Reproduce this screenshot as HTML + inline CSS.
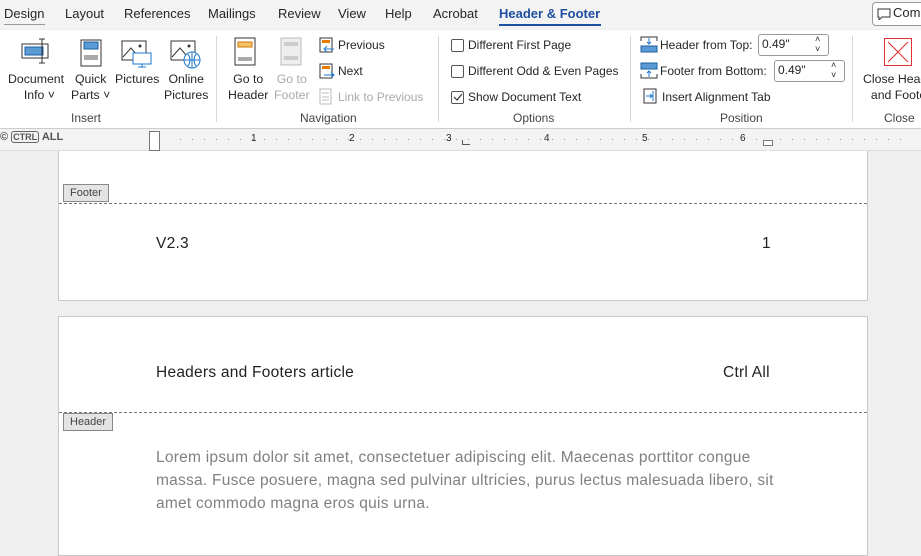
<!DOCTYPE html>
<html><head><style>
*{margin:0;padding:0;box-sizing:border-box}
body{width:921px;height:549px;overflow:hidden;background:#efefef;font-family:"Segoe UI","Liberation Sans",sans-serif;font-size:12px;color:#262626;position:relative}
.a{position:absolute;white-space:nowrap}
.tab{top:6px;font-size:13px;color:#262626}
.lbl{font-size:12.3px;text-align:center;line-height:16px}
.grp{top:111px;font-size:12px;color:#444}
.sep{position:absolute;top:36px;width:1px;height:86px;background:#d8d8d8}
.cb{position:absolute;width:13px;height:13px;border:1px solid #555;border-radius:2px;background:#fff}
.page{position:absolute;left:58px;width:810px;background:#fff;border:1px solid #c8c8c8}
.doc{font-family:"Liberation Sans",sans-serif;font-size:15.5px;letter-spacing:0.25px;color:#222}
.tag{position:absolute;background:#e4e4e4;border:1px solid #888;font-size:11px;color:#444;padding:0 6px;height:18px;line-height:16px}
.dash{position:absolute;left:0;right:0;border-top:1px dashed #777}
</style></head><body>
<div class="page" style="top:140px;height:161px">
<div class="dash" style="top:62px"></div>
<div class="tag" style="left:4px;top:43px">Footer</div>
<div class="a doc" style="left:97px;top:94px">V2.3</div>
<div class="a doc" style="left:703px;top:94px">1</div>
</div>
<div class="page" style="top:316px;height:240px">
<div class="a doc" style="left:97px;top:47px">Headers and Footers article</div>
<div class="a doc" style="left:664px;top:47px">Ctrl All</div>
<div class="dash" style="top:95px"></div>
<div class="tag" style="left:4px;top:96px">Header</div>
<div class="a doc" style="left:97px;top:129px;color:#808080;line-height:23px;white-space:normal;width:625px">Lorem ipsum dolor sit amet, consectetuer adipiscing elit. Maecenas porttitor congue massa. Fusce posuere, magna sed pulvinar ultricies, purus lectus malesuada libero, sit amet commodo magna eros quis urna.</div>
</div>
<div class="a" style="left:0;top:0;width:921px;height:30px;background:#f3f3f3"></div>
<div class="a tab" style="left:4px">Design</div>
<div class="a" style="left:4px;top:24px;width:41px;height:1px;background:#999"></div>
<div class="a tab" style="left:65px">Layout</div>
<div class="a tab" style="left:124px">References</div>
<div class="a tab" style="left:208px">Mailings</div>
<div class="a tab" style="left:278px">Review</div>
<div class="a tab" style="left:338px">View</div>
<div class="a tab" style="left:385px">Help</div>
<div class="a tab" style="left:433px">Acrobat</div>
<div class="a tab" style="left:499px;color:#1e4fa0;font-weight:bold">Header &amp; Footer</div>
<div class="a" style="left:499px;top:24px;width:102px;height:2px;background:#1e4fa0"></div>
<div class="a" style="left:872px;top:2px;width:60px;height:24px;border:1px solid #999;border-radius:4px;background:#fff;font-size:13px;padding:2px 0 0 20px">Com</div>
<svg class="a" style="left:877px;top:8px" width="14" height="12"><path d="M1 1h12v8H5l-3 3V9H1z" fill="none" stroke="#333"/></svg>
<div class="a" style="left:0;top:30px;width:921px;height:98px;background:#fff;box-shadow:0 1px 2px #bbb"></div>
<svg class="a" style="left:20px;top:36px" width="34" height="30"><rect x="2" y="8" width="26" height="14" fill="none" stroke="#333"/><rect x="5" y="11" width="18" height="8" fill="#5b9bd5" stroke="#1e5fa0"/><path d="M22 3v24M19 3h6M19 27h6" stroke="#333" fill="none"/></svg>
<svg class="a" style="left:76px;top:37px" width="28" height="30"><rect x="5" y="3" width="20" height="26" fill="#fff" stroke="#333"/><rect x="8" y="5" width="14" height="7" fill="#5b9bd5" stroke="#1e5fa0"/><rect x="8" y="18" width="14" height="5" fill="#aaa"/></svg>
<svg class="a" style="left:121px;top:40px" width="32" height="28"><rect x="1" y="1" width="24" height="19" fill="none" stroke="#333"/><path d="M2 17l8-9 6 7" fill="none" stroke="#333"/><circle cx="19" cy="6" r="1.5" fill="#333"/><rect x="12" y="13" width="18" height="11" fill="#fff" stroke="#1e7ad0"/><path d="M21 24v3M17 27h8" stroke="#1e7ad0"/></svg>
<svg class="a" style="left:170px;top:40px" width="32" height="30"><rect x="1" y="1" width="24" height="19" fill="none" stroke="#333"/><path d="M2 17l8-9 6 7" fill="none" stroke="#333"/><circle cx="19" cy="6" r="1.5" fill="#333"/><circle cx="22" cy="20" r="8" fill="#fff" stroke="#1e7ad0"/><path d="M14 20h16M22 12v16M18 14q4 6 0 12M26 14q-4 6 0 12" fill="none" stroke="#1e7ad0"/></svg>
<div class="a lbl" style="left:8px;top:71px">Document<br>&nbsp;&nbsp;Info ˅</div>
<div class="a lbl" style="left:71px;top:71px">Quick<br>Parts ˅</div>
<div class="a lbl" style="left:115px;top:71px">Pictures</div>
<div class="a lbl" style="left:164px;top:71px">Online<br>Pictures</div>
<div class="a grp" style="left:71px">Insert</div>
<div class="sep" style="left:216px"></div>
<svg class="a" style="left:233px;top:37px" width="26" height="30"><rect x="2" y="1" width="20" height="27" fill="#fff" stroke="#333"/><rect x="5" y="5" width="14" height="5" fill="#f5c26b" stroke="#d07a00"/><rect x="5" y="20" width="14" height="4" fill="#aaa"/></svg>
<svg class="a" style="left:279px;top:37px" width="26" height="30"><rect x="2" y="1" width="20" height="27" fill="#eee" stroke="#bbb"/><rect x="5" y="5" width="14" height="4" fill="#ccc"/><rect x="5" y="19" width="14" height="4" fill="#ccc"/></svg>
<div class="a lbl" style="left:228px;top:71px">Go to<br>Header</div>
<div class="a lbl" style="left:274px;top:71px;color:#aaa">Go to<br>Footer</div>
<svg class="a" style="left:319px;top:37px" width="16" height="17"><rect x="1" y="1" width="12" height="14" fill="#fff" stroke="#333"/><rect x="3" y="3" width="8" height="3" fill="#e87a00"/><path d="M15 12H5M8 9l-3 3 3 3" fill="none" stroke="#1e7ad0"/></svg>
<svg class="a" style="left:319px;top:63px" width="16" height="17"><rect x="1" y="1" width="12" height="14" fill="#fff" stroke="#333"/><rect x="3" y="3" width="8" height="3" fill="#e87a00"/><path d="M5 12h10M12 9l3 3-3 3" fill="none" stroke="#1e7ad0"/></svg>
<svg class="a" style="left:318px;top:88px" width="16" height="17"><rect x="2" y="1" width="11" height="15" fill="#fff" stroke="#bbb"/><path d="M4 5h7M4 9h7M4 12h7" stroke="#bbb"/></svg>
<div class="a" style="left:338px;top:38px">Previous</div>
<div class="a" style="left:338px;top:64px">Next</div>
<div class="a" style="left:338px;top:90px;color:#aaa">Link to Previous</div>
<div class="a grp" style="left:300px">Navigation</div>
<div class="sep" style="left:438px"></div>
<div class="cb" style="left:451px;top:39px"></div>
<div class="cb" style="left:451px;top:65px"></div>
<div class="cb" style="left:451px;top:91px"></div>
<svg class="a" style="left:453px;top:93px" width="10" height="9"><path d="M1 4l3 3 5-6" fill="none" stroke="#333" stroke-width="1.2"/></svg>
<div class="a" style="left:468px;top:38px">Different First Page</div>
<div class="a" style="left:468px;top:64px">Different Odd &amp; Even Pages</div>
<div class="a" style="left:468px;top:90px">Show Document Text</div>
<div class="a grp" style="left:513px">Options</div>
<div class="sep" style="left:630px"></div>
<svg class="a" style="left:640px;top:36px" width="18" height="17"><path d="M1 5V1h16v4" fill="none" stroke="#333"/><path d="M9 2v6M7 6l2 2 2-2" fill="none" stroke="#1e7ad0"/><rect x="1" y="10" width="16" height="6" fill="#5b9bd5" stroke="#1e5fa0"/></svg>
<svg class="a" style="left:640px;top:62px" width="18" height="17"><rect x="1" y="1" width="16" height="6" fill="#5b9bd5" stroke="#1e5fa0"/><path d="M1 12v4h16v-4" fill="none" stroke="#333"/><path d="M9 15V9M7 11l2-2 2 2" fill="none" stroke="#1e7ad0"/></svg>
<svg class="a" style="left:643px;top:88px" width="14" height="16"><rect x="1" y="1" width="12" height="14" fill="none" stroke="#333"/><path d="M3 8h6M7 6l2 2-2 2" fill="none" stroke="#1e7ad0"/><path d="M10 3v10" stroke="#1e7ad0"/></svg>
<div class="a" style="left:660px;top:38px">Header from Top:</div>
<div class="a" style="left:660px;top:64px">Footer from Bottom:</div>
<div class="a" style="left:662px;top:90px">Insert Alignment Tab</div>
<div class="a" style="left:758px;top:34px;width:71px;height:22px;border:1px solid #999;border-radius:3px;background:#fff;padding:2px 0 0 3px">0.49"</div>
<div class="a" style="left:774px;top:60px;width:71px;height:22px;border:1px solid #999;border-radius:3px;background:#fff;padding:2px 0 0 3px">0.49"</div>
<div class="a" style="left:815px;top:34px;font-size:9px;line-height:10px">˄<br>˅</div>
<div class="a" style="left:831px;top:60px;font-size:9px;line-height:10px">˄<br>˅</div>
<div class="a grp" style="left:720px">Position</div>
<div class="sep" style="left:852px"></div>
<svg class="a" style="left:884px;top:38px" width="28" height="28"><rect x="0.5" y="0.5" width="27" height="27" fill="#fff" stroke="#e03030"/><path d="M4 4l20 20M24 4L4 24" stroke="#e03030"/></svg>
<div class="a lbl" style="left:863px;top:71px">Close Head<br>&nbsp;&nbsp;and Foote</div>
<div class="a grp" style="left:884px">Close</div>
<div class="a" style="left:0;top:129px;width:921px;height:22px;background:#f3f3f3;border-bottom:1px solid #ddd"></div>
<div class="a" style="left:0;top:131px;font-size:11px;color:#555;font-weight:bold">© <span style="border:1.5px solid #666;border-radius:3px;padding:0 1px;font-size:9px">CTRL</span> ALL</div>
<div class="a" style="left:180px;top:139px;width:580px;height:1px;background:repeating-linear-gradient(90deg,#999 0 1px,transparent 1px 12px)"></div>
<div class="a" style="left:149px;top:131px;width:11px;height:20px;border:1px solid #777;background:#fff"></div>
<div class="a" style="left:251px;top:133px;font-size:10px">1</div>
<div class="a" style="left:349px;top:133px;font-size:10px">2</div>
<div class="a" style="left:446px;top:133px;font-size:10px">3</div>
<div class="a" style="left:544px;top:133px;font-size:10px">4</div>
<div class="a" style="left:642px;top:133px;font-size:10px">5</div>
<div class="a" style="left:740px;top:133px;font-size:10px">6</div>
<div class="a" style="left:462px;top:140px;width:8px;height:5px;border-left:1px solid #555;border-bottom:1px solid #555"></div>
<div class="a" style="left:763px;top:140px;width:10px;height:6px;border:1px solid #777;background:#fff"></div>
<div class="a" style="left:780px;top:139px;width:130px;height:1px;background:repeating-linear-gradient(90deg,#999 0 1px,transparent 1px 12px)"></div>
</body></html>
